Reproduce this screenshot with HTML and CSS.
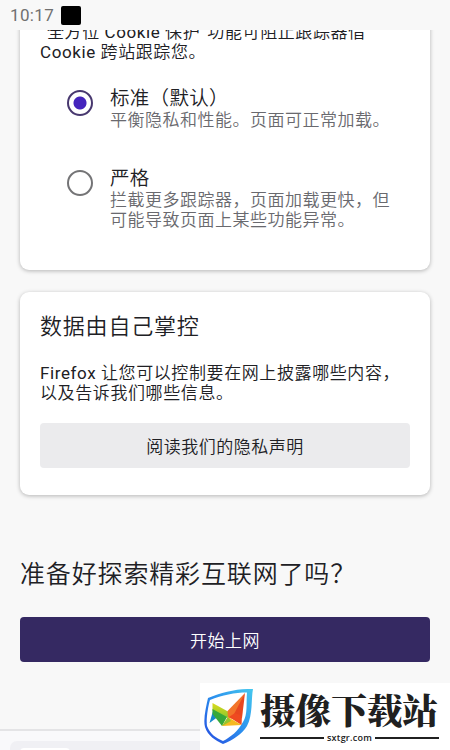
FILE: index.html
```html
<!DOCTYPE html>
<html lang="zh-CN">
<head>
<meta charset="utf-8">
<title>Firefox</title>
<link rel="stylesheet" href="styles.css">
</head>
<body>
<header class="status"><span>10:17</span><i class="status-icon"></i></header>
<main class="scroll">
  <section class="card tracking">
    <p class="body"><span class="quote">“</span>全方位 <span class="latin">Cookie</span> 保护<span class="quote">”</span>功能可阻止跟踪器借<br><span class="latin">Cookie</span> 跨站跟踪您。</p>
    <div class="option">
      <span class="radio checked"></span>
      <div><h3>标准（默认）</h3><p class="hint">平衡隐私和性能。页面可正常加载。</p></div>
    </div>
    <div class="option strict">
      <span class="radio"></span>
      <div><h3>严格</h3><p class="hint">拦截更多跟踪器，页面加载更快，但<br>可能导致页面上某些功能异常。</p></div>
    </div>
  </section>
  <section class="card privacy">
    <h2>数据由自己掌控</h2>
    <p class="body"><span class="latin">Firefox</span> 让您可以控制要在网上披露哪些内容，<br>以及告诉我们哪些信息。</p>
    <div class="button secondary">阅读我们的隐私声明</div>
  </section>
  <h1>准备好探索精彩互联网了吗？</h1>
  <div class="button primary">开始上网</div>
</main>
<footer class="toolbar"><div class="address"><i class="tile"></i></div></footer>
<aside class="watermark">
  <svg class="logo" viewBox="0 0 50 58" width="50" height="58">
    <defs>
      <linearGradient id="edge" x1="1" y1="0" x2="0" y2="1"><stop offset="0" stop-color="#45c8ee"/><stop offset=".5" stop-color="#2b8fee"/><stop offset="1" stop-color="#2548df"/></linearGradient>
      <linearGradient id="leaf" x1="0" y1="0" x2="0" y2="1"><stop offset="0" stop-color="#dddb1c"/><stop offset="1" stop-color="#8cc72f"/></linearGradient>
    </defs>
    <path d="M49 0C34-.5 18 3 4 9C2 18-1 31 1 38C4 47 11 51 19 55C29 51 38 45 43 37C49 26 47 10 49 0ZM43 3.5C42 15 44 25 39 33C34 42 27 48 19 52C12 49 6 45 3 37C2 30 4 18 6 11C18 6 31 3.500 43 3.500Z" fill="url(#edge)" fill-rule="evenodd"/>
    <path d="M9 22L5.500 34L15 27Z" fill="#168acc"/>
    <path d="M8.500 14L24 22.500L24 29L8.500 22Z" fill="url(#leaf)"/>
    <path d="M8.500 20L23 28L18 37L8.500 25Z" fill="#36a83a"/>
    <path d="M23.500 22L41 4L31 30L24 29Z" fill="#f2752a"/>
    <path d="M41 4L38 29L29 27Z" fill="#e84720"/>
    <path d="M38 27L37.500 36L25 28L31 24Z" fill="#ef4a20"/>
    <path d="M24 28L18 37L37.500 36Z" fill="#f5b921"/>
    <path d="M24 28L27 32L18 37Z" fill="#93c52d"/>
  </svg>
  <div class="brand"><b>摄像下载站</b><div class="site"><span>sxtgr.com</span></div></div>
</aside>
</body>
</html>
```
FILE: styles.css
```css
* { box-sizing: border-box; }
body {
  margin: 0;
  width: 450px;
  height: 750px;
  display: flex;
  flex-direction: column;
  position: relative;
  overflow: hidden;
  background: #f8f8f8;
  color: #202024;
  font-family: Roboto, "Noto Sans CJK SC", sans-serif;
}
h1, h2, h3, p { margin: 0; font-weight: 350; white-space: nowrap; }
.status {
  height: 30px;
  flex: none;
  display: flex;
  align-items: center;
  gap: 7px;
  padding-left: 10px;
  font-size: 17px;
  letter-spacing: .35px;
  color: #707070;
}
.status-icon { width: 20px; height: 19px; border-radius: 2px; background: #000; }
.scroll { height: 699px; flex: none; overflow: hidden; padding: 0 20px; }
.card {
  border-radius: 9px;
  padding: 0 20px;
  background: #fff;
  box-shadow: 0 1px 4px rgba(0, 0, 0, .28);
}
.tracking { height: 260px; margin-top: -20px; padding-top: 12px; }
.body { font-size: 17px; line-height: 20px; letter-spacing: .6px; }
.latin { font-weight: 400; }
.quote { display: inline-block; width: 7px; }
.option { display: flex; gap: 17px; padding-left: 27px; margin-top: 24px; }
.option.strict { margin-top: 36px; }
.radio {
  width: 26px;
  height: 26px;
  flex: none;
  margin: 4px 0 0;
  border: 2.5px solid #747476;
  border-radius: 50%;
}
.checked { border-color: #48386f; background: radial-gradient(circle, #4524bd 0 6px, transparent 7px); }
h3 { font-size: 19.5px; line-height: 26px; margin-bottom: -2px; letter-spacing: .3px; }
.hint { font-size: 17px; line-height: 20px; letter-spacing: .5px; color: #69696e; }
.privacy { height: 203px; margin-top: 22px; padding-top: 19px; }
h2 { font-size: 22px; line-height: 32px; letter-spacing: .8px; }
.privacy .body { margin-top: 20px; }
.button {
  height: 45px;
  border-radius: 4px;
  text-align: center;
  font-size: 17px;
  font-weight: 350;
  line-height: 48px;
  letter-spacing: .5px;
}
.secondary { margin-top: 20px; background: #ebebed; }
.primary { margin-top: 23px; background: #352962; color: #fff; }
h1 { font-size: 25px; line-height: 38px; letter-spacing: .85px; margin-top: 61px; }
.toolbar { height: 21px; flex: none; padding: 10px 10px 0; border-top: 2px solid #e4e4e6; background: #f9f9fb; }
.address { height: 12px; padding: 7px 10px 0; border-radius: 7px 7px 0 0; background: #f0f0f4; }
.tile { display: block; width: 50px; height: 5px; border-radius: 4px 4px 0 0; background: #fff; }
.watermark {
  position: absolute;
  left: 200px;
  top: 683px;
  width: 250px;
  height: 67px;
  display: flex;
  gap: 6px;
  padding: 6px 0 0 4px;
  background: #fff;
}
.logo { flex: none; }
.brand { width: 179px; color: #202020; }
.brand b {
  display: block;
  font-family: "Noto Serif CJK SC", "Noto Sans CJK SC", serif;
  font-size: 35.6px;
  line-height: 40px;
  height: 42px;
  font-weight: 900;
  white-space: nowrap;
}
.site { display: flex; align-items: center; gap: 3px; height: 14px; font: 600 9px/14px "Open Sans", sans-serif; letter-spacing: .25px; }
.site::before, .site::after { content: ""; flex: 1; height: 2px; background: #202020; }
```
